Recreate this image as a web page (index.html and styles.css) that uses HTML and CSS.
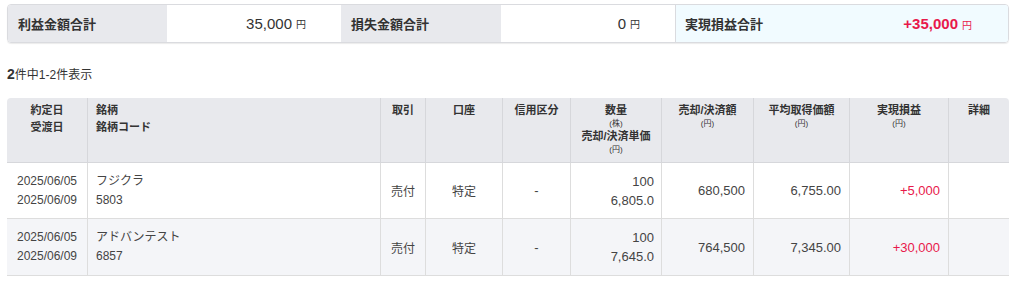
FILE: index.html
```html
<!DOCTYPE html>
<html lang="ja">
<head>
<meta charset="utf-8">
<link rel="stylesheet" href="styles.css">
</head>
<body>
<div class="page">
  <div class="summary">
    <div class="s-label w159">利益金額合計</div>
    <div class="s-value w174">35,000<span class="yen">円</span></div>
    <div class="s-label w160">損失金額合計</div>
    <div class="s-value w175">0<span class="yen">円</span></div>
    <div class="s-total">
      <div class="s-total-label">実現損益合計</div>
      <div class="s-total-value">+35,000<span class="yen">円</span></div>
    </div>
  </div>

  <div class="count"><b>2</b>件中1-2件表示</div>

  <table class="grid">
    <colgroup>
      <col style="width:80px"><col style="width:293px"><col style="width:45px"><col style="width:77px"><col style="width:68px"><col style="width:91px"><col style="width:92px"><col style="width:96px"><col style="width:99px"><col style="width:61px">
    </colgroup>
    <thead>
      <tr>
        <th class="c"><div class="hl">約定日</div><div class="hl">受渡日</div></th>
        <th class="l"><div class="hl">銘柄</div><div class="hl">銘柄コード</div></th>
        <th class="c"><div class="hl">取引</div></th>
        <th class="c"><div class="hl">口座</div></th>
        <th class="c"><div class="hl">信用区分</div></th>
        <th class="c"><div class="hl">数量</div><div class="unit">(株)</div><div class="hl">売却/決済単価</div><div class="unit">(円)</div></th>
        <th class="c"><div class="hl">売却/決済額</div><div class="unit">(円)</div></th>
        <th class="c"><div class="hl">平均取得価額</div><div class="unit">(円)</div></th>
        <th class="c"><div class="hl">実現損益</div><div class="unit">(円)</div></th>
        <th class="c"><div class="hl">詳細</div></th>
      </tr>
    </thead>
    <tbody>
      <tr>
        <td class="date"><div>2025/06/05</div><div>2025/06/09</div></td>
        <td class="name"><div class="nm">フジクラ</div><div class="code">5803</div></td>
        <td class="c jp">売付</td>
        <td class="c jp">特定</td>
        <td class="c">-</td>
        <td class="r two"><div>100</div><div>6,805.0</div></td>
        <td class="r">680,500</td>
        <td class="r">6,755.00</td>
        <td class="r plus">+5,000</td>
        <td></td>
      </tr>
      <tr class="alt">
        <td class="date"><div>2025/06/05</div><div>2025/06/09</div></td>
        <td class="name"><div class="nm">アドバンテスト</div><div class="code">6857</div></td>
        <td class="c jp">売付</td>
        <td class="c jp">特定</td>
        <td class="c">-</td>
        <td class="r two"><div>100</div><div>7,645.0</div></td>
        <td class="r">764,500</td>
        <td class="r">7,345.00</td>
        <td class="r plus">+30,000</td>
        <td></td>
      </tr>
    </tbody>
  </table>
</div>
</body>
</html>
```

FILE: styles.css
```css
html, body {
  margin: 0;
  padding: 0;
  background: #ffffff;
}
body {
  font-family: "Liberation Sans", "Noto Sans CJK JP", sans-serif;
  color: #333333;
}
.page {
  padding: 4px 0 0 7px;
  width: 1002px;
}
.summary {
  display: flex;
  height: 37px;
  border: 1px solid #dadbdf;
  border-radius: 4px;
  overflow: hidden;
  box-shadow: 0 1px 1px rgba(0, 0, 0, 0.08);
}
.s-label {
  background: #e8e9ed;
  font-weight: bold;
  font-size: 13px;
  display: flex;
  align-items: center;
  padding-left: 10px;
  box-sizing: border-box;
}
.s-value {
  background: #ffffff;
  font-size: 15px;
  display: flex;
  align-items: center;
  justify-content: flex-end;
  padding-right: 35px;
  box-sizing: border-box;
}
.w159 { width: 159px; }
.w174 { width: 174px; }
.w160 { width: 160px; }
.w175 { width: 175px; border-right: 1px solid #dadbdf; }
.yen {
  font-size: 10px;
  margin-left: 4px;
}
.s-total {
  flex: 1;
  background: #f1fbff;
  display: flex;
  align-items: center;
  justify-content: space-between;
  padding: 0 36px 0 9px;
}
.s-total-label {
  font-weight: bold;
  font-size: 13px;
}
.s-total-value {
  font-weight: bold;
  font-size: 15px;
  color: #e8194b;
}
.s-total-value .yen {
  font-weight: normal;
}
.count {
  margin-top: 23px;
  font-size: 12px;
  line-height: 16px;
  height: 16px;
}
.count b {
  font-size: 14px;
}
.grid {
  margin-top: 16px;
  width: 1002px;
  table-layout: fixed;
  border-collapse: separate;
  border-spacing: 0;
}
.grid th {
  background: #e8e9ed;
  height: 65px;
  box-sizing: border-box;
  vertical-align: top;
  padding: 4px 8px 0;
  font-size: 11px;
  color: #333333;
  border-left: 1px solid #d6d7db;
  border-bottom: 1px solid #d6d7db;
}
.grid th:first-child {
  border-left: none;
  border-top-left-radius: 4px;
}
.grid th:last-child {
  border-top-right-radius: 4px;
}
.grid th.c { text-align: center; }
.grid th.l { text-align: left; }
.hl {
  line-height: 17px;
  font-weight: bold;
}
.unit {
  font-size: 8px;
  line-height: 9px;
  font-weight: normal;
}
.grid td {
  font-size: 13px;
  color: #444444;
  height: 56px;
  box-sizing: border-box;
  vertical-align: middle;
  border-left: 1px solid #dddddd;
  border-bottom: 1px solid #dddddd;
  padding: 0 8px;
  background: #ffffff;
}
.grid tr.alt td {
  background: #f4f5f8;
  height: 57px;
}
.grid td:first-child {
  border-left: none;
}
.grid td.c { text-align: center; }
.grid td.r { text-align: right; }
.grid td.jp { font-size: 12px; }
.grid td.two { padding-right: 7px; }
.grid td.date {
  font-size: 12px;
  line-height: 19px;
  text-align: center;
  padding: 0;
}
.grid td.name {
  line-height: 19px;
}
.nm { font-size: 12px; }
.code { font-size: 12px; }
.two div { line-height: 19px; }
.grid td.plus { color: #e8194b; }
```
